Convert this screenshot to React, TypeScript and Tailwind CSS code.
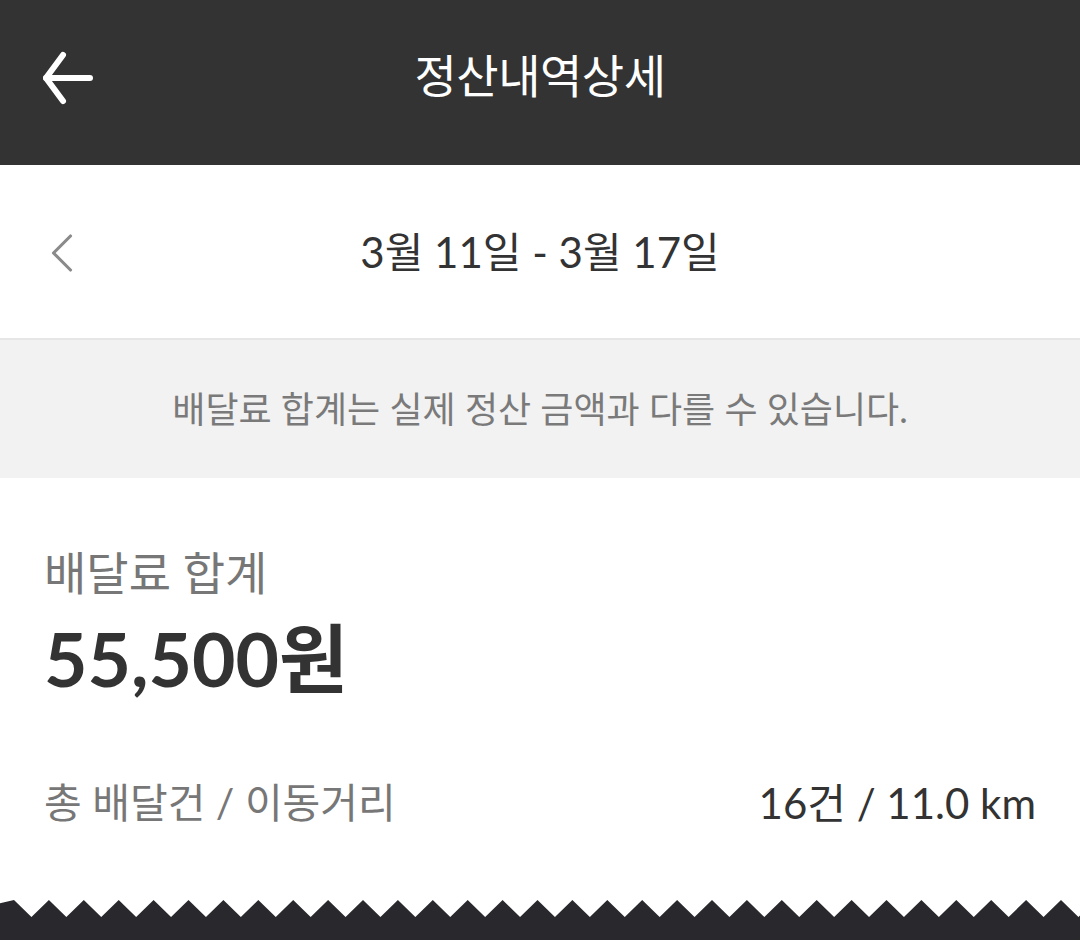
import { ChevronLeft } from 'lucide-react';

const font = { fontFamily: 'Lato, "Noto Sans CJK KR", "Noto Sans", sans-serif' };

const ZigZag = () => {
  const period = 34.9;
  const h = 17;
  const pts: string[] = ['0,40', `0,${h - (14 / (period / 2)) * h}`];
  for (let i = 0; i < 33; i++) {
    const peak = 14 + i * period;
    pts.push(`${peak},0`);
    pts.push(`${peak + period / 2},${h}`);
  }
  pts.push('1080,40');
  return (
    <svg width="1080" height="40" viewBox="0 0 1080 40" className="block shrink-0">
      <polygon points={pts.join(' ')} fill="#29282d" />
    </svg>
  );
};

export default function App() {
  return (
    <div className="flex h-[940px] w-[1080px] flex-col overflow-hidden bg-white" style={font}>
      <header className="relative flex h-[165px] shrink-0 items-center justify-center bg-[#333333] pb-[14px]">
        <button className="absolute left-[38px] top-[50px] flex h-[56px] w-[58px] items-center justify-center">
          <svg width="54" height="54" viewBox="0 0 54 54" fill="none" stroke="white" strokeWidth="6" strokeLinecap="round" strokeLinejoin="round">
            <path d="M6 27 H50" />
            <path d="M23 4 L6 27 L23 50" />
          </svg>
        </button>
        <h1 className="text-[46px] leading-none tracking-[-0.5px] text-white">정산내역상세</h1>
      </header>

      <div className="relative flex h-[175px] shrink-0 items-center justify-center border-b-2 border-[#e6e6e6]">
        <ChevronLeft className="absolute left-[28px] top-[54px]" size={68} strokeWidth={1.1} color="#8a8a8a" />
        <span className="text-[42px] leading-none text-[#333333]">3월 11일 - 3월 17일</span>
      </div>

      <div className="flex h-[138px] shrink-0 items-center justify-center bg-[#f2f2f2]">
        <p className="text-[36px] leading-none text-[#7a7a7a]">
          배달료 합계는 실제 정산 금액과 다를 수 있습니다.
        </p>
      </div>

      <section className="flex flex-1 flex-col px-[44px] pt-[67px]">
        <div className="text-[46px] leading-[55px] text-[#777777]">배달료 합계</div>
        <div className="mt-[13px] text-[75px] font-bold leading-[90px] text-[#333333]">55,500원</div>
        <div className="mt-[75px] flex items-center justify-between">
          <span className="text-[41px] leading-[50px] text-[#777777]">총 배달건 / 이동거리</span>
          <span className="text-[42px] leading-[50px] text-[#333333]">16건 / 11.0 km</span>
        </div>
      </section>

      <ZigZag />
    </div>
  );
}
